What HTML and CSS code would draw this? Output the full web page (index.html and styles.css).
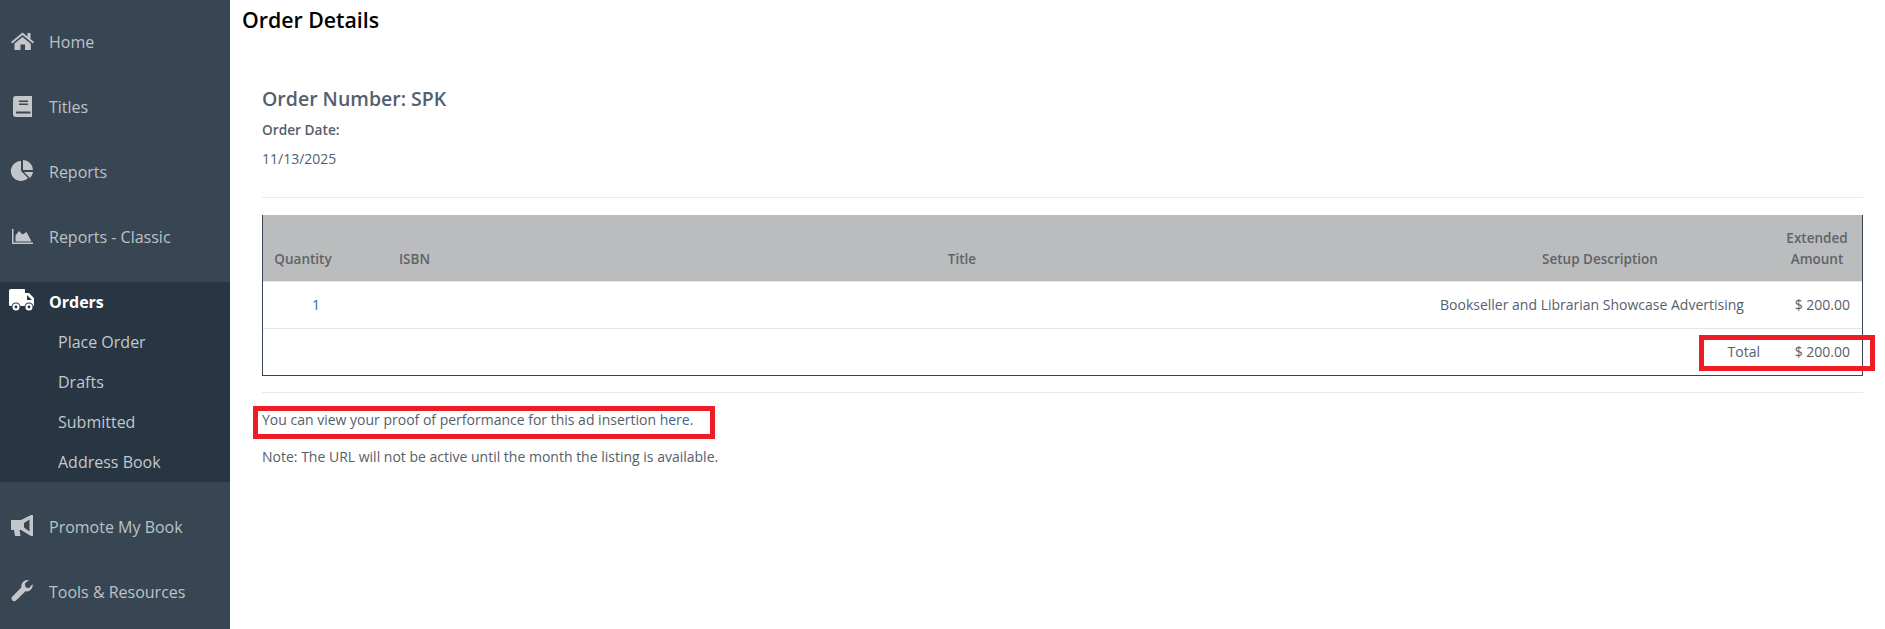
FILE: index.html
```html
<!DOCTYPE html>
<html lang="en">
<head>
  <meta charset="UTF-8">
  <title>Order Details</title>
  <link rel="stylesheet" href="styles.css">
</head>
<body>
  <!-- Sidebar -->
  <nav class="sidebar">
    <a class="nav-item" href="#">
      <svg class="nav-icon" viewBox="0 0 24 24"><path d="M12.500 4.500 L17.500 8.500 V5 H20.500 V11 L24 14 L23 15.500 L12.500 7 L2.200 15.500 L1 14 Z M12.500 9 L20.800 15.800 V22 H15 V16.500 H10.500 V22 H4.500 V15.500 Z"/></svg>
      <span>Home</span>
    </a>
    <a class="nav-item" href="#">
      <svg class="nav-icon" viewBox="0 0 24 24"><path fill-rule="evenodd" d="M6 3 H22 V24 H6 C4 24 3 23 3 21 V6 C3 4 4 3 6 3 Z M9 7.500 V9 H18 V7.500 Z M9 10.500 V12 H18 V10.500 Z M6 18.500 V20.500 H20.500 V18.500 Z"/></svg>
      <span>Titles</span>
    </a>
    <a class="nav-item" href="#">
      <svg class="nav-icon" viewBox="0 0 24 24"><path d="M11 3 V13 L18 20 A10 10 0 1 1 11 3 Z M13 2 A10 10 0 0 1 23 12 H13 Z M14 14 H23 A10 10 0 0 1 20 20 Z"/></svg>
      <span>Reports</span>
    </a>
    <a class="nav-item" href="#">
      <svg class="nav-icon" viewBox="0 0 24 24"><path d="M2 6 H3.500 V19.500 H23 V21 H2 Z M5.500 18.500 V12.500 L9 8 L12.500 11.500 L16.500 9 L21.500 18.500 Z"/></svg>
      <span>Reports - Classic</span>
    </a>
    <div class="nav-group">
      <a class="nav-item nav-item-active" href="#">
        <svg class="nav-icon nav-icon-truck" viewBox="0 0 26 24">
          <path fill-rule="evenodd" d="M2 1 H15 C15.800 1 16 1.500 16 2 V5 H20 L25 10 V18 H1.500 C.5 18 0 17.300 0 16.500 V3 C0 1.800 .8 1 2 1 Z M18 7 V12 H23 L18 7 Z"/>
          <circle class="wheel-ring" cx="7" cy="19" r="4.500"/>
          <circle cx="7" cy="19" r="3.500"/>
          <circle class="wheel-ring" cx="7" cy="19" r="1.400"/>
          <circle class="wheel-ring" cx="20" cy="19" r="4.500"/>
          <circle cx="20" cy="19" r="3.500"/>
          <circle class="wheel-ring" cx="20" cy="19" r="1.400"/>
        </svg>
        <span>Orders</span>
      </a>
      <a class="sub-item" href="#">Place Order</a>
      <a class="sub-item" href="#">Drafts</a>
      <a class="sub-item" href="#">Submitted</a>
      <a class="sub-item" href="#">Address Book</a>
    </div>
    <a class="nav-item nav-item-after" href="#">
      <svg class="nav-icon" viewBox="0 0 24 24"><path fill-rule="evenodd" d="M2 7 H11 L21 2 H23 V23 H21 L11 17 H9.500 L10.500 23 H5 L4 17 H2 C1.400 17 1 16.600 1 16 V8 C1 7.400 1.400 7 2 7 Z M19.500 6.500 L14 10 V14.500 L19.500 18.500 Z"/></svg>
      <span>Promote My Book</span>
    </a>
    <a class="nav-item" href="#">
      <svg class="nav-icon" viewBox="0 0 24 24"><path d="M22.500 6 C23.500 10 20 14.300 15.500 13.300 L6 22.500 C4.800 23.500 3 23.300 2.200 22.200 C1.200 21.200 1.300 19.700 2.200 18.700 L11.500 9.300 C10.500 4.800 14.500 1.300 19 2 L14.800 5.500 L15.500 9.300 L19 10.300 Z"/></svg>
      <span>Tools &amp; Resources</span>
    </a>
  </nav>

  <!-- Main content -->
  <main class="content">
    <h1 class="page-title">Order Details</h1>
    <div class="order-panel">
      <h2 class="order-number">Order Number: SPK</h2>
      <p class="order-date-label">Order Date:</p>
      <p class="order-date">11/13/2025</p>
      <hr class="rule rule-top">

      <table class="order-table">
        <thead>
          <tr>
            <th class="col-qty">Quantity</th>
            <th class="col-isbn">ISBN</th>
            <th class="col-title">Title</th>
            <th class="col-desc">Setup Description</th>
            <th class="col-amount">Extended<br>Amount</th>
          </tr>
        </thead>
        <tbody>
          <tr class="item-row">
            <td class="cell-qty"><a href="#">1</a></td>
            <td></td>
            <td></td>
            <td class="cell-desc">Bookseller and Librarian Showcase Advertising</td>
            <td class="cell-right">$ 200.00</td>
          </tr>
          <tr class="total-row">
            <td colspan="4" class="cell-right">Total</td>
            <td class="cell-right">$ 200.00</td>
          </tr>
        </tbody>
      </table>

      <hr class="rule rule-bottom">
      <p class="proof-line">You can view your proof of performance for this ad insertion <a href="#">here</a>.</p>
      <p class="note-line">Note: The URL will not be active until the month the listing is available.</p>
    </div>
  </main>

  <!-- Red annotation boxes drawn over the screenshot -->
  <div class="callout callout-total"></div>
  <div class="callout callout-proof"></div>
</body>
</html>
```

FILE: styles.css
```css
* {
  box-sizing: border-box;
}

html, body {
  height: 100%;
}

body {
  margin: 0;
  display: flex;
  overflow: hidden;
  position: relative;
  background-color: #fff;
  color: #56606b;
  font-family: "Open Sans", sans-serif;
  font-size: 14px;
}

a {
  text-decoration: none;
}

/* Sidebar */
.sidebar {
  width: 230px;
  flex: none;
  background-color: #384654;
  padding-top: 9px;
}

.nav-item {
  display: flex;
  align-items: center;
  height: 65px;
  padding-left: 10px;
  color: #bcc2c7;
  font-size: 16px;
}

.nav-icon {
  width: 24px;
  height: 24px;
  margin-right: 15px;
  fill: #c4c7ca;
  position: relative;
  top: -2px;
}

.nav-group {
  background-color: #283644;
  height: 200px;
  margin-top: 13px;
}

.nav-item-active {
  height: 40px;
  color: #fff;
  font-weight: 700;
}

.nav-icon-truck {
  fill: #fff;
  width: 26px;
  margin-left: -1px;
  margin-right: 14px;
}

.wheel-ring {
  fill: #283644;
}

.nav-item-after {
  margin-top: 12px;
}

.sub-item {
  display: flex;
  align-items: center;
  height: 40px;
  padding-left: 58px;
  color: #c3c8cd;
  font-size: 16px;
}

/* Main */
.content {
  flex: 1;
  min-width: 0;
  padding: 0 22px 0 12px;
}

.page-title {
  margin: 5px 0 0;
  color: #000;
  font-size: 21.3px;
  font-weight: 600;
  line-height: 30px;
}

.order-panel {
  padding: 51px 0 0 20px;
}

.order-number {
  margin: 0;
  font-size: 19.5px;
  font-weight: 600;
  line-height: 26px;
}

.order-date-label {
  margin: 8px 0 0;
  font-size: 13.7px;
  font-weight: 600;
  line-height: 20px;
}

.order-date {
  margin: 9px 0 0;
  line-height: 20px;
}

.rule {
  margin: 0;
  border: 0;
  border-top: 1px solid #eaeaea;
}

.rule-top {
  margin-top: 28px;
}

.rule-bottom {
  margin-top: 16px;
}

/* Table */
.order-table {
  width: 100%;
  table-layout: fixed;
  margin-top: 17px;
  border-collapse: separate;
  border-spacing: 0;
  border-left: 1px solid #384654;
  border-right: 1px solid #384654;
  border-bottom: 1px solid #384654;
}

.order-table th {
  height: 67px;
  padding: 0 0 11px;
  background-color: #bbbcbe;
  color: #5f6468;
  font-size: 13.5px;
  font-weight: 600;
  line-height: 21px;
  vertical-align: bottom;
  text-align: center;
  border-bottom: 1px solid #e6e6e6;
}

.order-table td {
  height: 47px;
  padding: 0 12px 2px;
}

.item-row td {
  border-bottom: 1px solid #e6e6e6;
}

.total-row td {
  height: 46px;
}

.col-qty {
  width: 80px;
}

.order-table th.col-isbn {
  width: 153px;
  padding-left: 56px;
  text-align: left;
}

.order-table th.col-desc {
  width: 344px;
}

.order-table th.col-amount {
  width: 90px;
}

.order-table td.cell-qty {
  padding: 0 0 2px 26px;
  text-align: center;
}

.cell-qty a,
.proof-line a {
  color: #38678f;
}

.order-table td.cell-desc {
  padding-right: 29px;
  text-align: right;
  white-space: nowrap;
}

.cell-right {
  text-align: right;
  white-space: nowrap;
}

.proof-line {
  margin: 17px 0 0;
  line-height: 20px;
}

.note-line {
  margin: 17px 0 0;
  line-height: 20px;
}

/* Callouts */
.callout {
  position: absolute;
  border: 5px solid #ee1c25;
}

.callout-total {
  left: 1699px;
  top: 335px;
  width: 176px;
  height: 36px;
}

.callout-proof {
  left: 253px;
  top: 406px;
  width: 462px;
  height: 33px;
}
```
